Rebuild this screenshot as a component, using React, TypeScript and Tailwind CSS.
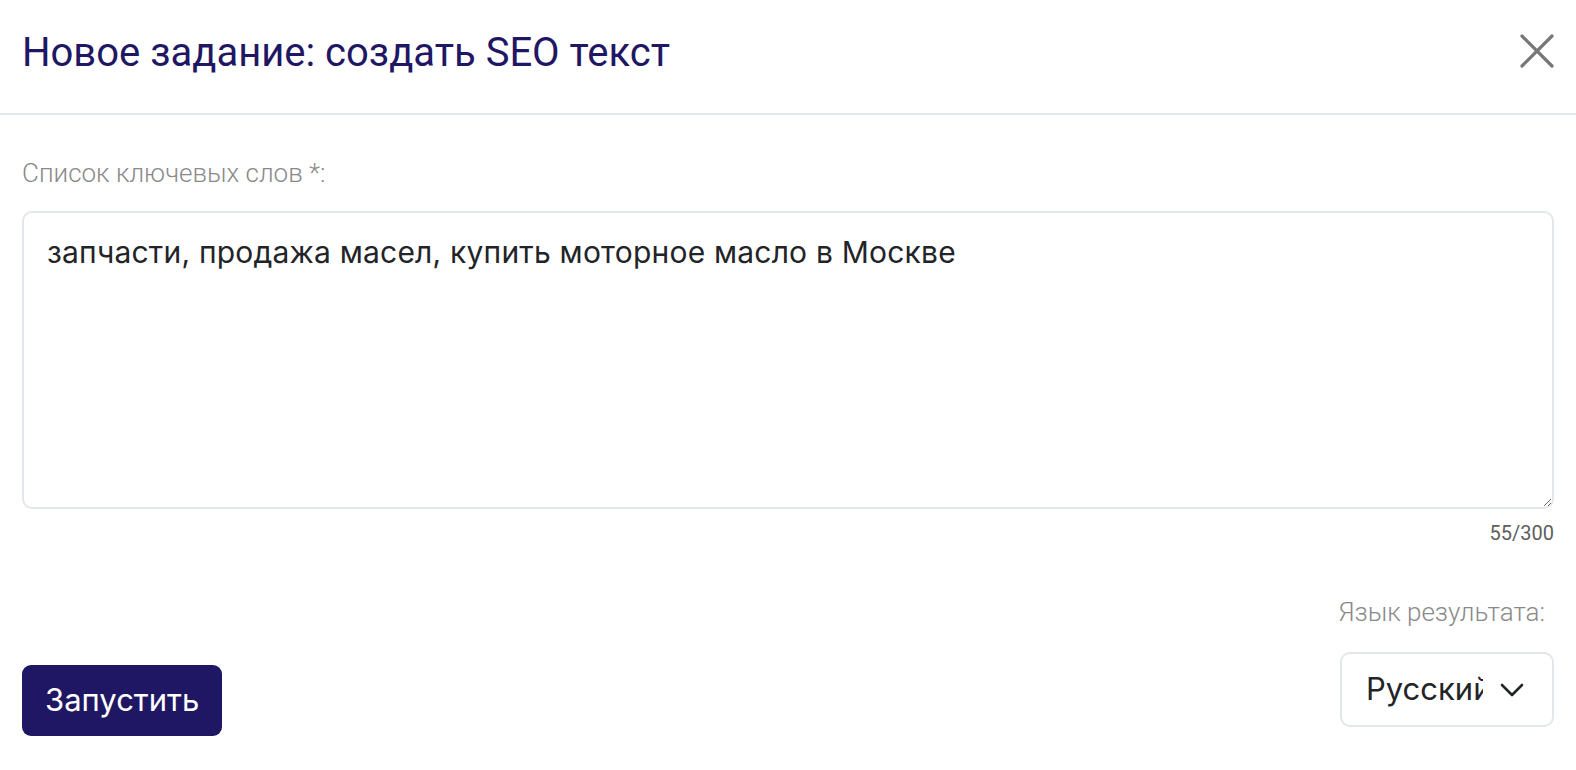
import React from "react";

export default function App() {
  return (
    <div className="w-[1576px] h-[770px] bg-white overflow-hidden" style={{ fontFamily: "Roboto, 'Noto Sans', sans-serif" }}>
      <div className="h-[115px] flex items-center justify-between pl-[22px] pr-[22px] border-b-2 border-[#e3e6ea]">
        <h1 className="text-[40px] leading-none text-[#1f1764] font-normal font-['Roboto',sans-serif] mt-[-8px]">
          Новое задание: создать SEO текст
        </h1>
        <button className="w-[34px] h-[34px] flex items-center justify-center mt-[-12px]">
          <svg width="34" height="34" viewBox="0 0 34 34" fill="none" stroke="#777777" strokeWidth="3.2" strokeLinecap="round">
            <path d="M2 2L32 32M32 2L2 32" />
          </svg>
        </button>
      </div>
      <div className="px-[22px] pt-[43px]">
        <label className="block text-[26px] leading-[30px] text-[#8a8a8a] font-light font-['Roboto',sans-serif]">
          Список ключевых слов *:
        </label>
        <div className="relative mt-[23px]">
          <textarea
            readOnly
            className="block w-full h-[298px] border-2 border-[#e3e6ea] rounded-[10px] px-[23px] py-[20px] text-[30px] tracking-[0.2px] leading-[38px] text-[#222428] font-['Inter',sans-serif] outline-none resize-y"
            value="запчасти, продажа масел, купить моторное масло в Москве"
          />
        </div>
        <div className="text-right mt-[13px] text-[20px] leading-[22px] text-[#5e5e5e] font-normal font-['Roboto',sans-serif]">
          55/300
        </div>
        <div className="flex justify-between items-end mt-[53px]">
          <button className="h-[71px] px-[23px] rounded-[9px] bg-[#1f1764] text-white text-[31px] font-['Inter',sans-serif] mb-[-9px]">
            Запустить
          </button>
          <div className="flex flex-col items-end">
            <div className="text-[26px] leading-[30px] text-[#8a8a8a] font-light font-['Roboto',sans-serif] pr-[9px]">
              Язык результата:
            </div>
            <div className="mt-[25px] w-[214px] h-[75px] border-2 border-[#e3e6ea] rounded-[10px] flex items-center pl-[24px] pr-[28px]">
              <span className="w-[117px] overflow-hidden whitespace-nowrap text-[31px] text-[#222428] font-['Inter',sans-serif]">
                Русский
              </span>
              <svg className="ml-auto" width="24" height="14" viewBox="0 0 24 14" fill="none" stroke="#222428" strokeWidth="2.6" strokeLinecap="round" strokeLinejoin="round">
                <path d="M2 2L12 12L22 2" />
              </svg>
            </div>
          </div>
        </div>
      </div>
    </div>
  );
}
